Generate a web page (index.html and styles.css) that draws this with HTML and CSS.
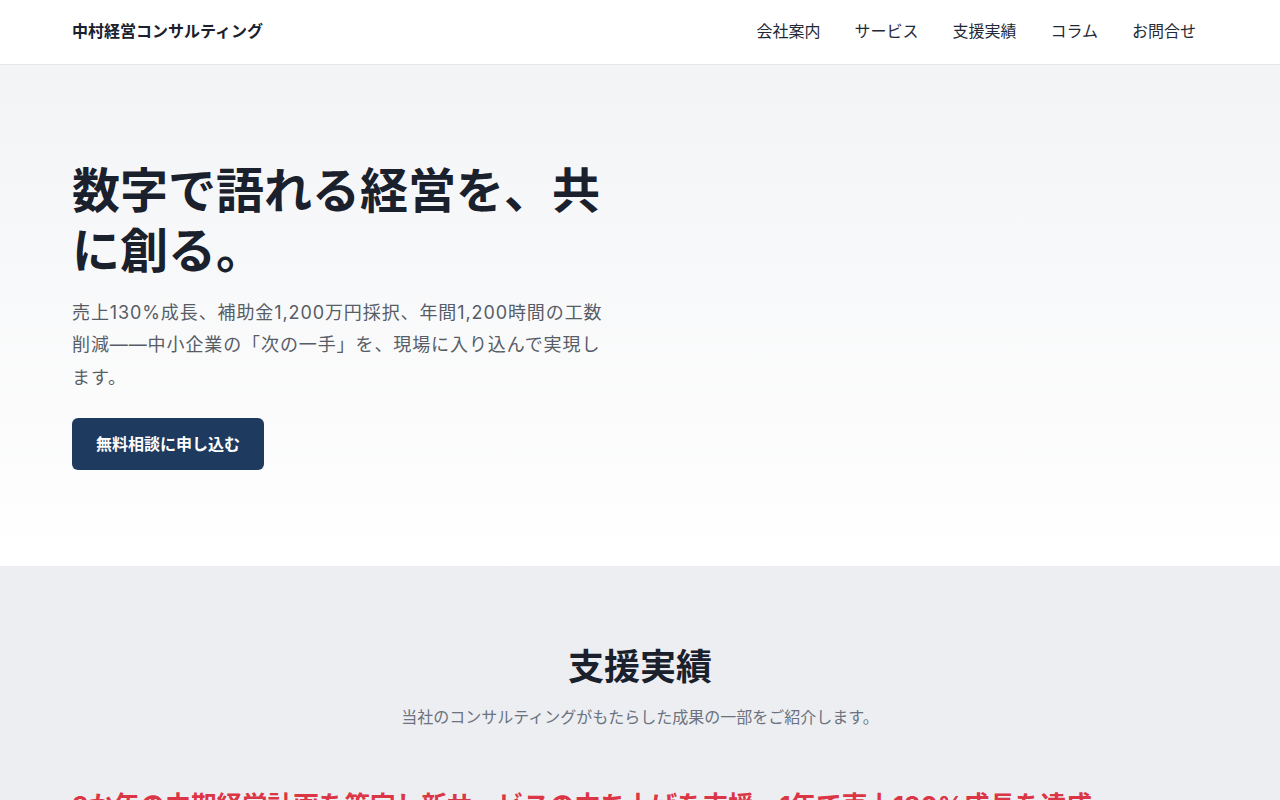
FILE: index.html
```html
<!DOCTYPE html>
<html lang="ja">
    <head>
        <meta charset="utf-8">
        <title>中村経営コンサルティング</title>
        <link rel="stylesheet" href="styles.css">
    </head>
    <body>
        <header class="site-header">
            <div class="container header-inner">
                <a class="logo" href="#">中村経営コンサルティング</a>
                <nav class="nav">
                    <a href="#">会社案内</a>
                    <a href="#">サービス</a>
                    <a href="#">支援実績</a>
                    <a href="#">コラム</a>
                    <a href="#">お問合せ</a>
                </nav>
            </div>
        </header>

        <section class="hero">
            <div class="container">
                <div class="hero-text">
                    <h1>数字で語れる経営を、共に創る。</h1>
                    <p>売上130%成長、補助金1,200万円採択、年間1,200時間の工数削減——中小企業の「次の一手」を、現場に入り込んで実現します。</p>
                    <a class="btn" href="#">無料相談に申し込む</a>
                </div>
            </div>
        </section>

        <section class="results">
            <div class="container">
                <h2>支援実績</h2>
                <p class="lead">当社のコンサルティングがもたらした成果の一部をご紹介します。</p>
                <h3 class="case-title">3か年の中期経営計画を策定し新サービスの立ち上げを支援、1年で売上130%成長を達成</h3>
            </div>
        </section>
    </body>
</html>
```

FILE: styles.css
```css
* {
    box-sizing: border-box;
}
body {
    margin: 0;
    font-family: "Inter", "Noto Sans CJK JP", sans-serif;
    color: #1a202c;
    background: #fff;
}
a {
    text-decoration: none;
    color: inherit;
}
.container {
    max-width: 1136px;
    margin: 0 auto;
}

/* header */
.site-header {
    background: #fff;
    border-bottom: 1px solid #e5e7eb;
}
.header-inner {
    height: 64px;
    padding-bottom: 4px;
    display: flex;
    align-items: center;
    justify-content: space-between;
}
.logo {
    font-weight: 700;
    font-size: 16px;
    color: #1a202c;
    margin-top: -1px;
}
.nav {
    display: flex;
    gap: 34px;
    padding-right: 12px;
}
.nav a {
    font-size: 16px;
    color: #1f2937;
}

/* hero */
.hero {
    background: linear-gradient(#f3f4f6, #ffffff);
    padding: 96px 0;
}
.hero-text {
    max-width: 536px;
}
.hero h1 {
    font-size: 48px;
    line-height: 60px;
    font-weight: 700;
    margin: 0 0 16px;
    color: #1a202c;
}
.hero p {
    font-size: 18px;
    line-height: 1.8;
    letter-spacing: 0.05em;
    color: #575d67;
    margin: 0 0 24px;
}
.btn {
    display: inline-block;
    background: #1e3a5f;
    color: #fff;
    font-weight: 700;
    font-size: 16px;
    line-height: 24px;
    padding: 14px 24px;
    border-radius: 6px;
}

/* results */
.results {
    background: #eceef1;
    padding: 80px 0;
}
.results h2 {
    text-align: center;
    font-size: 36px;
    line-height: 1.2;
    font-weight: 700;
    margin: 0 0 16px;
}
.lead {
    text-align: center;
    font-size: 16px;
    line-height: 24px;
    color: #6b7280;
    margin: 0 0 59px;
}
.case-title {
    font-size: 25.6px;
    line-height: 1.4;
    font-weight: 700;
    color: #dc3545;
    margin: 0;
}
```
